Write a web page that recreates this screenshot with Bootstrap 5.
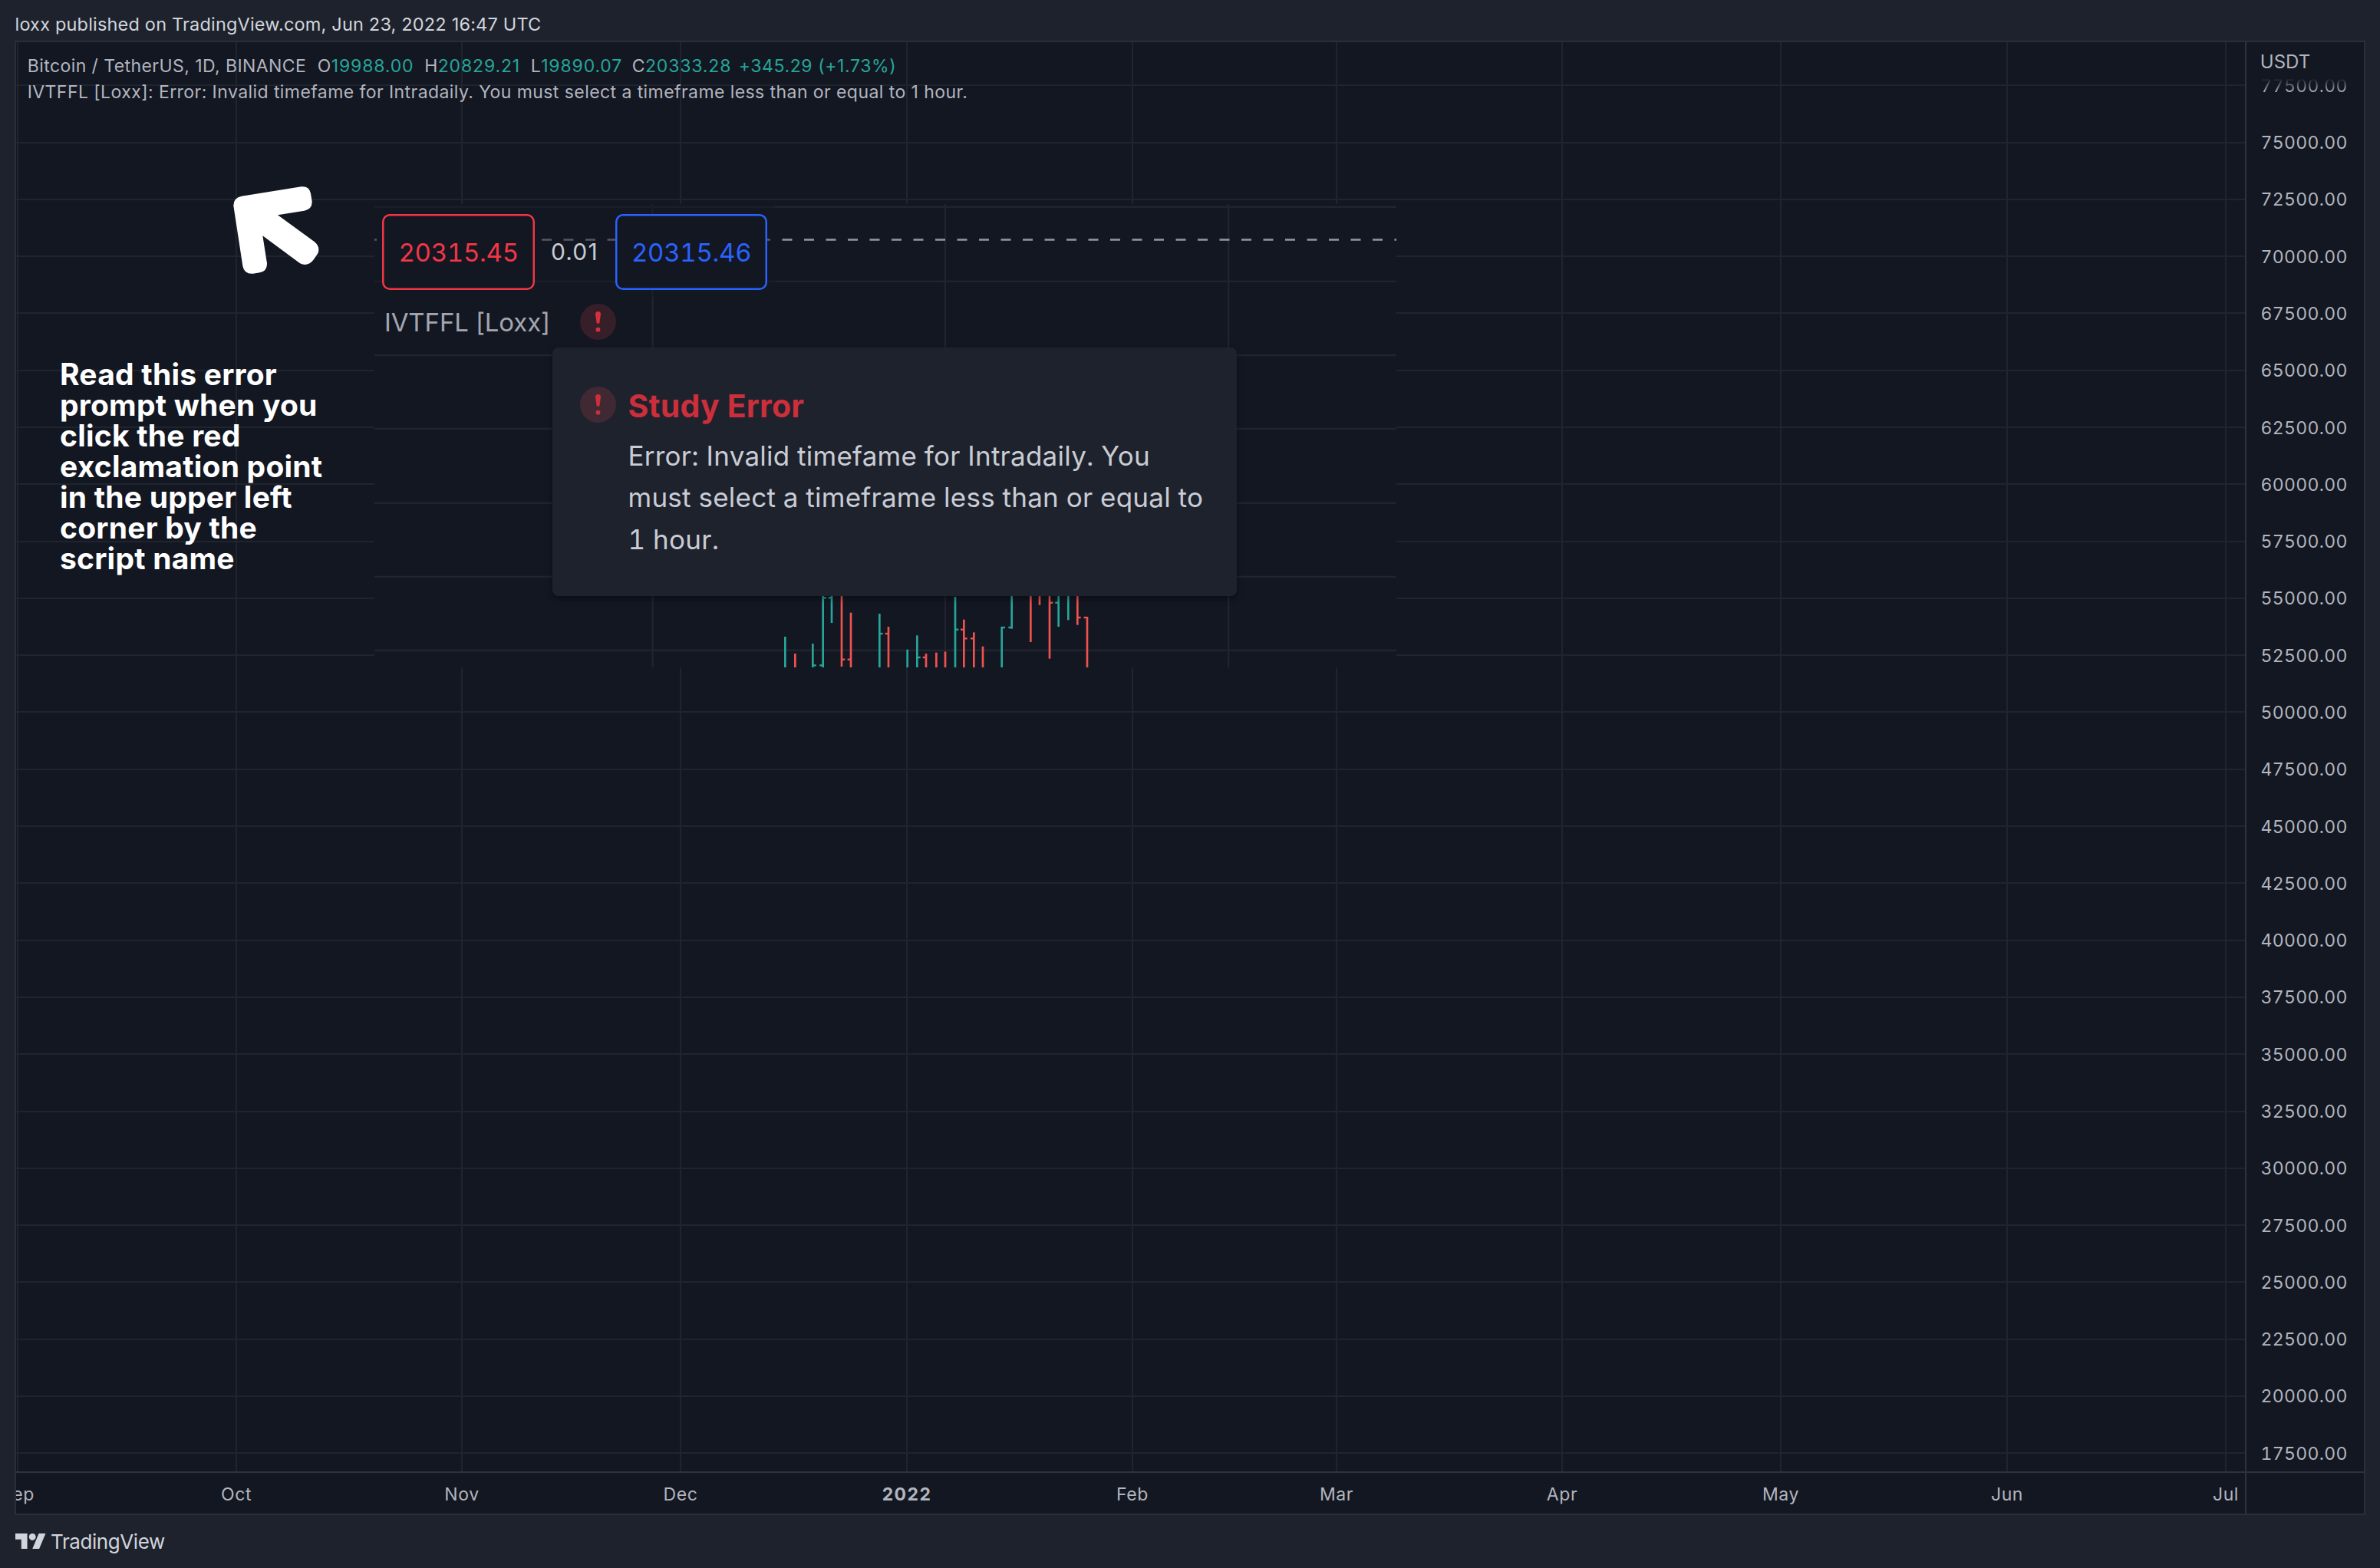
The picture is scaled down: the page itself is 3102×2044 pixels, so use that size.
<!DOCTYPE html>
<html lang="en">
<head>
<meta charset="utf-8">
<title>BTCUSDT chart</title>
<link rel="stylesheet" href="https://cdn.jsdelivr.net/npm/bootstrap@5.3.0/dist/css/bootstrap.min.css">
<style>
  body { background: #1e222d; color: #b2b5be; font-family: Inter, "Liberation Sans", sans-serif; font-size: 23px; width: 3102px; height: 2044px; overflow: hidden; }
  .pub-line { height: 53px; padding: 10px 0 0 19.5px; line-height: 43px; font-size: 23.5px; letter-spacing: .185px; color: #d1d4dc; white-space: nowrap; }
  .chart-frame { margin: 0 19px; height: 1922px; background: #131722; border: 2px solid #2a2e39; }
  .pane { width: 2905px; height: 1863px; }
  .price-axis { width: 155px; height: 1863px; border-left: 2px solid #2f323e; padding: 19.9px 0 0 18.5px; letter-spacing: .35px; font-variant-numeric: tabular-nums; }
  .price-axis li { height: 74.29px; line-height: 74.29px; flex: none; }
  .price-axis li:first-child { background: linear-gradient(#131722 37%, #b2b5be 61%); -webkit-background-clip: text; background-clip: text; color: transparent; }
  .axis-unit { top: 7.6px; left: 17.8px; font-size: 24px; line-height: 36px; letter-spacing: 0; }
  .time-axis { height: 55px; border-top: 2px solid #2f323e; }
  .time-labels { width: 2905px; padding-left: 2px; line-height: 57px; letter-spacing: .6px; }
  .time-labels li { flex: none; }
  .time-labels span { display: inline-block; transform: translateX(-50%); }
  .time-labels .year { font-weight: 700; letter-spacing: 1.4px; }
  .axis-corner { width: 155px; border-left: 2px solid #2f323e; }
  .legend-box { top: 13.6px; left: 14.7px; line-height: 34px; letter-spacing: .43px; white-space: nowrap; }
  .ohlc { display: grid; grid-template-columns: 378px 139.5px 138.5px 132px 139px auto; }
  .ohlc b { font-weight: 400; color: #26a69a; letter-spacing: .85px; }
  .ohlc b.chg { letter-spacing: .6px; }
  .note { top: 412.6px; left: 57px; width: 380px; color: #fff; font-weight: 700; font-size: 39px; line-height: 40px; letter-spacing: .22px; }
  .arrow { top: 165px; left: 259px; }
  .inset { top: 211px; left: 467px; width: 1332px; height: 604px; background: #131722; }
  .quotes { padding: 13px 0 0 10.4px; height: 111.5px; }
  .quote { width: 198.5px; height: 98.5px; box-shadow: inset 0 0 0 2.5px currentColor; border-radius: 10px; background: #131722; font-size: 33px; letter-spacing: -.3px; font-variant-numeric: tabular-nums; padding: 2.5px 0 0 0; }
  .quote.sell { color: #f23645; }
  .quote.buy { color: #2962ff; }
  .spread { width: 105px; font-size: 30px; letter-spacing: 1.15px; color: #c9cbd2; padding: 1px 1px 0 0; }
  .study { padding-left: 13px; height: 60px; margin-top: 12.4px; font-size: 33px; letter-spacing: -.13px; color: #a3a6af; gap: 39px; }
  .study span { padding-top: 1px; }
  .popup { top: 186.5px; left: 232px; width: 892px; height: 324px; padding: 51.2px 30px 0 36px; gap: 15.5px; background: #1e222d; border-radius: 8px; box-shadow: 0 4px 8px rgba(0,0,0,.4); color: #c9ccd4; }
  .popup h2 { margin: 0 0 13px; font-size: 41px; line-height: 50px; font-weight: 700; letter-spacing: .2px; color: #cc2f3c; }
  .popup p { margin: 0; font-size: 35px; line-height: 54.5px; letter-spacing: .25px; white-space: nowrap; font-variant-numeric: tabular-nums; }
  .popup svg { margin-top: .5px; }
  .brand-row { padding: 15px 0 0 20px; gap: 6px; color: #d1d4dc; font-size: 26px; line-height: 40px; letter-spacing: -.42px; }
  .brand-row svg { margin-top: -2px; }
</style>
<script src="https://cdn.jsdelivr.net/npm/bootstrap@5.3.0/dist/js/bootstrap.bundle.min.js"></script>
</head>
<body>
<header class="pub-line">loxx published on TradingView.com, Jun 23, 2022 16:47 UTC</header>

<main class="chart-frame">
  <div class="d-flex">
    <section class="pane position-relative overflow-hidden">
      <svg id="grid" class="d-block" width="2905" height="1863" viewBox="21 55 2905 1863" fill="#20242f"></svg>

      <div class="legend-box position-absolute">
        <div class="ohlc">
          <span>Bitcoin / TetherUS, 1D, BINANCE</span>
          <span>O<b>19988.00</b></span>
          <span>H<b>20829.21</b></span>
          <span>L<b>19890.07</b></span>
          <span>C<b>20333.28</b></span>
          <b class="chg">+345.29 (+1.73%)</b>
        </div>
        <div>IVTFFL [Loxx]: Error: Invalid timefame for Intradaily. You must select a timeframe less than or equal to 1 hour.</div>
      </div>

      <svg class="arrow position-absolute" width="180" height="160" viewBox="0 0 540 480" fill="#fff">
        <path d="M105 107L338 70Q370 67 375 97L380 128Q381 158 350 164L246 181L390 286Q413 306 403 331L385 357Q362 384 333 370L187 262L204 370Q205 400 176 406L150 410Q115 413 109 380L73 145Q72 114 105 107Z"/>
      </svg>

      <div class="note position-absolute">Read this error<br>prompt when you<br>click the red<br>exclamation point<br>in the upper left<br>corner by the<br>script name</div>

      <section class="inset position-absolute overflow-hidden">
        <svg id="bars" class="position-absolute top-0 start-0" width="1332" height="604" viewBox="488 266 1332 604"></svg>
        <div class="position-relative">
          <div class="quotes d-flex align-items-center">
            <div class="quote sell d-flex align-items-center justify-content-center">20315.45</div>
            <div class="spread text-center">0.01</div>
            <div class="quote buy d-flex align-items-center justify-content-center">20315.46</div>
          </div>
          <div class="study d-flex align-items-center">
            <span>IVTFFL [Loxx]</span>
            <svg width="47" height="47" viewBox="0 0 47 47"><circle cx="23.5" cy="23.5" r="23.5" fill="#371f29"/><path fill="#d5303c" d="M20 13.5a3.5 3.5 0 0 1 7 0l-1.5 10.8q-.4 1.5-2 1.5t-2-1.5z"/><circle cx="23.5" cy="33.7" r="2.9" fill="#d5303c"/></svg>
          </div>
        </div>
        <article class="popup position-absolute d-flex align-items-start">
          <svg class="flex-shrink-0" width="47" height="47" viewBox="0 0 47 47"><circle cx="23.5" cy="23.5" r="23.5" fill="#402933"/><path fill="#cc2f3c" d="M20 13.5a3.5 3.5 0 0 1 7 0l-1.5 10.8q-.4 1.5-2 1.5t-2-1.5z"/><circle cx="23.5" cy="33.7" r="2.9" fill="#cc2f3c"/></svg>
          <div>
            <h2>Study Error</h2>
            <p>Error: Invalid timefame for Intradaily. You<br>must select a timeframe less than or equal to<br>1 hour.</p>
          </div>
        </article>
      </section>
    </section>

    <aside class="price-axis position-relative overflow-hidden">
      <div class="axis-unit position-absolute">USDT</div>
      <ul id="prices" class="list-unstyled d-flex flex-column m-0"></ul>
    </aside>
  </div>

  <div class="time-axis d-flex">
    <ul id="months" class="time-labels list-unstyled d-flex overflow-hidden m-0"></ul>
    <div class="axis-corner"></div>
  </div>
</main>

<footer class="brand-row d-flex align-items-center">
  <svg width="40" height="20" viewBox="0 4 36 18" fill="#d1d4dc"><path d="M14 22H7V11H0V4h14v18zM28 22h-8l7.5-18h8L28 22z"/><circle cx="20" cy="8" r="4"/></svg>
  <span>TradingView</span>
</footer>

<script>
  const rect = (x, y, w, h, extra = '') => `<rect x="${x}" y="${y}" width="${w}" height="${h}" ${extra}/>`;

  // price scale and horizontal grid
  let grid = '', prices = '';
  for (let i = 0; i < 25; i++) {
    grid += rect(21, Math.round(110.3 + 74.29 * i), 2905, 2);
    prices += `<li>${77500 - 2500 * i}.00</li>`;
  }

  // time scale and vertical grid
  const months = [['Sep', 22], ['Oct', 307], ['Nov', 601], ['Dec', 886], ['2022', 1181], ['Feb', 1475], ['Mar', 1741], ['Apr', 2035], ['May', 2320], ['Jun', 2615], ['Jul', 2900]];
  let labels = '';
  months.forEach(([name, x], i) => {
    grid += rect(x, 55, 2, 1863);
    const next = i < months.length - 1 ? months[i + 1][1] : 2926;
    labels += `<li style="width:${next - x}px"><span${name === '2022' ? ' class="year"' : ''}>${name}</span></li>`;
  });
  document.getElementById('grid').innerHTML = grid;
  document.getElementById('prices').innerHTML = prices;
  document.getElementById('months').innerHTML = labels;

  // nested chart: grid, dimmed legend area, price line, bars
  let s = '';
  [269.8, 366.8, 463, 559, 655.8, 751.8, 847.8].forEach(y => s += rect(488, y - 1.2, 1332, 2.4, 'fill="#20242f"'));
  [850.6, 1231.9, 1601.2].forEach(x => s += rect(x - 1.2, 266, 2.4, 604, 'fill="#20242f"'));
  s += '<path d="M478 312.5H1820" stroke="#9598a1" stroke-width="2.6" stroke-dasharray="13 15.5"/>';
  s += rect(488, 266, 522, 122, 'fill="#131722" fill-opacity=".5"');
  // x, colour, top, bottom, close tick (right), open tick (left)
  const bars = [
    [190,'g',270,390],[229,'r',336,390],[298,'g',297,390,382],[338,'g',100,390,118,382],[372,'g',100,215,0,118],
    [411,'r',100,386,359],[447,'r',176,390,0,359],[559,'g',180,390,258],[594,'r',231,390,0,258],[668,'g',320,390],
    [706,'g',265,390,351],[741,'r',336,390,0,351],[781,'r',332,390],[816,'r',328,390],[855,'g',114,390,242],
    [889,'r',203,390,277,242],[928,'r',253,390,0,277],[963,'r',308,390],[1037,'g',231,390,234],[1076,'g',100,238,0,234],
    [1150,'r',100,290],[1185,'r',100,145],[1224,'r',100,355,137],[1259,'g',100,230,0,137],[1297,'g',100,204],
    [1333,'r',100,223,195],[1371,'r',192,390,0,195]];
  s += '<g transform="translate(960 740) scale(.33333)">';
  for (const [x, c, top, bottom, close, open] of bars) {
    const f = `fill="${c === 'g' ? '#26a69a' : '#ef5350'}"`;
    s += rect(x - 4, top, 8, bottom - top + 1, f);
    if (close) s += rect(x, close - 3.5, 13, 7, f);
    if (open) s += rect(x - 13, open - 3.5, 13, 7, f);
  }
  document.getElementById('bars').innerHTML = s + '</g>';
</script>
</body>
</html>
